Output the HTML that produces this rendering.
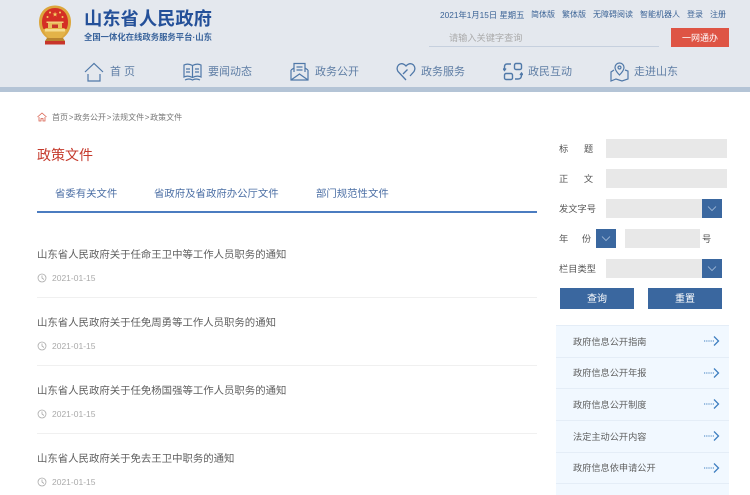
<!DOCTYPE html>
<html lang="zh"><head><meta charset="utf-8">
<style>
html,body{margin:0;padding:0;background:#fff}
#p{position:relative;width:750px;height:495px;overflow:hidden;font-family:"Liberation Sans","Noto Sans CJK SC",sans-serif;background:#fff}
#p div,#p span.a,#p svg{position:absolute}
.t{white-space:nowrap;line-height:1}
.nav{font-size:11px;color:#5f7ea5;top:67px}
.top{font-size:8px;color:#3b6396;top:11px}
.lb{font-size:9.25px;color:#555;left:559px}
.in{background:#e8e8e8}
.bt{background:#3a679f}
.li{left:573px;font-size:9.2px;color:#5f5f5f}
.bd{left:556px;width:173px;height:1px;background:#e4edf7}
.h{left:37px;font-size:10.4px;color:#5f5f5f}
.d{left:52px;font-size:8.5px;color:#aaa}
.ln{left:37px;width:500px;height:1px;background:#f0f0f0}
.tab{top:189.500px;font-size:10.4px;color:#4c6fa5}
.s{margin:0 .7px}
</style></head><body><div id="p">

<div style="left:0;top:0;width:750px;height:87px;background:#e4e8ee"></div>
<div style="left:0;top:87px;width:750px;height:5px;background:#b4c4d6"></div>

<!-- emblem -->
<svg style="left:37px;top:4px" width="36" height="41" viewBox="0 0 36 41">
<path d="M18 1.500C8 1.500 2 9 2 18C2 26 6 31 10 34H26C30 31 34 26 34 18C34 9 28 1.500 18 1.500Z" fill="#dca63c"/>
<path d="M18 4C10 4 5 10 5 18C5 21 5.500 23 6.500 25H29.500C30.500 23 31 21 31 18C31 10 26 4 18 4Z" fill="#d42f25"/>
<path d="M6 26Q11 36 18 36Q25 36 30 26L27 24H9Z" fill="#e3b348"/>
<rect x="8" y="25" width="20" height="2.500" fill="#f5dc90"/>
<path d="M11 24V19H25V24Z" fill="#e9bd5c"/>
<rect x="9.500" y="17.500" width="17" height="1.500" fill="#f0cd78"/>
<rect x="15" y="20.500" width="6" height="3.500" fill="#c8352a"/>
<rect x="8" y="37" width="20" height="3.500" fill="#c8352a"/>
<path d="M10 34L8 37H28L26 34Z" fill="#b8842f"/>
<text x="18" y="12.500" font-size="6.500" fill="#f5d060" text-anchor="middle" font-family="DejaVu Sans">★</text>
<circle cx="10.500" cy="13" r="1" fill="#f5d060"/><circle cx="25.500" cy="13" r="1" fill="#f5d060"/><circle cx="13" cy="8.500" r="1" fill="#f5d060"/><circle cx="23" cy="8.500" r="1" fill="#f5d060"/>
</svg>

<div class="t" style="left:84px;top:10px;font-size:18.3px;font-weight:700;color:#245099">山东省人民政府</div>
<div class="t" style="left:84px;top:33px;font-size:8.35px;font-weight:700;color:#3a649c">全国一体化在线政务服务平台·山东</div>

<div class="t top" style="left:440px;font-size:8.3px">2021年1月15日 星期五</div>
<div class="t top" style="left:531px">简体版</div>
<div class="t top" style="left:562px">繁体版</div>
<div class="t top" style="left:593px">无障碍阅读</div>
<div class="t top" style="left:640px">智能机器人</div>
<div class="t top" style="left:687px">登录</div>
<div class="t top" style="left:710px">注册</div>

<div class="t" style="left:449px;top:34px;font-size:9.2px;color:#aaa">请输入关键字查询</div>
<div style="left:429px;top:46px;width:230px;height:1px;background:#c6d0de"></div>
<div style="left:671px;top:28px;width:58px;height:19px;background:#de5444"></div>
<div class="t" style="left:682px;top:34px;font-size:9px;color:#fff">一网通办</div>

<!-- nav icons -->
<svg style="left:84px;top:62px" width="20" height="20" viewBox="0 0 20 20" fill="none" stroke="#4f78a8" stroke-width="1.200">
<path d="M1 10L10 1.500L19 10"/><path d="M4 12V19H16V12"/></svg>
<div class="t nav" style="left:110px">首<span style="margin-left:3px">页</span></div>

<svg style="left:183px;top:62px" width="19" height="19" viewBox="0 0 19 19" fill="none" stroke="#4f78a8" stroke-width="1.200">
<path d="M1 3Q5 1 9.500 3.500Q14 1 18 3V15Q14 13 9.500 15.500Q5 13 1 15ZM9.500 3.500V15.500"/><path d="M3 7H7M3 10H7M12 7H16M12 10H16M2 18Q6 16 9.500 18Q13 16 17 18"/></svg>
<div class="t nav" style="left:208px">要闻动态</div>

<svg style="left:290px;top:62px" width="19" height="19" viewBox="0 0 19 19" fill="none" stroke="#4f78a8" stroke-width="1.200">
<path d="M1 8V18H18V8M1 18L9.500 12L18 18M1 8L4 6M18 8L15 6"/><path d="M4 10V1.500H15V10M6.500 5H12.500M6.500 8H12.500"/></svg>
<div class="t nav" style="left:315px">政务公开</div>

<svg style="left:396px;top:62px" width="20" height="19" viewBox="0 0 20 19" fill="none" stroke="#4f78a8" stroke-width="1.300">
<path d="M10 18L2 9.500Q0 6 2.500 3Q6 0 10 4Q14 0 17.500 3Q20 6 18 9.500L14 14"/><path d="M7 12L11.500 7.500"/></svg>
<div class="t nav" style="left:421px">政务服务</div>

<svg style="left:503px;top:62px" width="20" height="19" viewBox="0 0 20 19" fill="none" stroke="#4f78a8" stroke-width="1.400">
<rect x="11.500" y="1.500" width="7" height="6" rx="1.500"/><rect x="1.500" y="11.500" width="8" height="6" rx="1.500"/>
<path d="M8 2H4Q1.500 2 1.500 5V8M0 6.500L1.500 8.500L3 6.500M12 17H15Q18.500 17 18.500 13V11M17 13L18.500 11L20 13"/></svg>
<div class="t nav" style="left:528px">政民互动</div>

<svg style="left:610px;top:62px" width="19" height="20" viewBox="0 0 19 20" fill="none" stroke="#4f78a8" stroke-width="1.200">
<path d="M9.500 13Q5 8.500 5 5.500A4.500 4.500 0 0 1 14 5.500Q14 8.500 9.500 13Z"/><circle cx="9.500" cy="5.500" r="1.500"/>
<path d="M4 8L1 10V19L6 17L12 19L18 17V9L15 8"/></svg>
<div class="t nav" style="left:634px">走进山东</div>

<!-- breadcrumb -->
<svg style="left:37px;top:112px" width="10" height="10" viewBox="0 0 10 10" fill="none" stroke="#d8604f" stroke-width=".8">
<path d="M.5 5L5 1L9.500 5M2 5V9H4V6.500H6V9H8V5"/></svg>
<div class="t" style="left:52px;top:113.500px;font-size:8px;color:#777">首页<span class="s">&gt;</span>政务公开<span class="s">&gt;</span>法规文件<span class="s">&gt;</span>政策文件</div>

<div class="t" style="left:37px;top:148px;font-size:14px;color:#c53a2c">政策文件</div>

<div class="t tab" style="left:55px">省委有关文件</div>
<div class="t tab" style="left:154px">省政府及省政府办公厅文件</div>
<div class="t tab" style="left:316px">部门规范性文件</div>
<div style="left:37px;top:211px;width:500px;height:2px;background:#4b7cc0"></div>

<div class="t h" style="top:250.500px">山东省人民政府关于任命王卫中等工作人员职务的通知</div>
<div class="t h" style="top:318.500px">山东省人民政府关于任免周勇等工作人员职务的通知</div>
<div class="t h" style="top:386.500px">山东省人民政府关于任免杨国强等工作人员职务的通知</div>
<div class="t h" style="top:454.500px">山东省人民政府关于免去王卫中职务的通知</div>

<svg style="left:37px;top:273px" width="10" height="10" viewBox="0 0 10 10" fill="none" stroke="#aaa" stroke-width=".8"><circle cx="5" cy="5" r="4"/><path d="M5 2.500V5L7 6.500"/></svg>
<svg style="left:37px;top:341px" width="10" height="10" viewBox="0 0 10 10" fill="none" stroke="#aaa" stroke-width=".8"><circle cx="5" cy="5" r="4"/><path d="M5 2.500V5L7 6.500"/></svg>
<svg style="left:37px;top:409px" width="10" height="10" viewBox="0 0 10 10" fill="none" stroke="#aaa" stroke-width=".8"><circle cx="5" cy="5" r="4"/><path d="M5 2.500V5L7 6.500"/></svg>
<svg style="left:37px;top:477px" width="10" height="10" viewBox="0 0 10 10" fill="none" stroke="#aaa" stroke-width=".8"><circle cx="5" cy="5" r="4"/><path d="M5 2.500V5L7 6.500"/></svg>

<div class="t d" style="top:274px">2021-01-15</div>
<div class="t d" style="top:342px">2021-01-15</div>
<div class="t d" style="top:410px">2021-01-15</div>
<div class="t d" style="top:478px">2021-01-15</div>

<div class="ln" style="top:297px"></div>
<div class="ln" style="top:365px"></div>
<div class="ln" style="top:433px"></div>

<!-- form -->
<div class="t lb" style="top:145px;word-spacing:13px">标 题</div>
<div class="in" style="left:606px;top:139px;width:121px;height:19px"></div>
<div class="t lb" style="top:175px;word-spacing:13px">正 文</div>
<div class="in" style="left:606px;top:169px;width:121px;height:19px"></div>
<div class="t lb" style="top:205px">发文字号</div>
<div class="in" style="left:606px;top:199px;width:96px;height:19px"></div>
<div class="bt" style="left:702px;top:199px;width:20px;height:19px"></div>
<svg style="left:702px;top:199px" width="20" height="19" fill="none" stroke="#a9c0dc" stroke-width=".8"><path d="M6 7.500L10 11.500L14 7.500"/></svg>

<div class="t lb" style="top:235px;word-spacing:11px">年 份</div>
<div class="bt" style="left:596px;top:229px;width:20px;height:19px"></div>
<svg style="left:596px;top:229px" width="20" height="19" fill="none" stroke="#a9c0dc" stroke-width=".8"><path d="M6 7.500L10 11.500L14 7.500"/></svg>
<div class="in" style="left:625px;top:229px;width:75px;height:19px"></div>
<div class="t lb" style="left:702px;top:235px">号</div>

<div class="t lb" style="top:265px">栏目类型</div>
<div class="in" style="left:606px;top:259px;width:96px;height:19px"></div>
<div class="bt" style="left:702px;top:259px;width:20px;height:19px"></div>
<svg style="left:702px;top:259px" width="20" height="19" fill="none" stroke="#a9c0dc" stroke-width=".8"><path d="M6 7.500L10 11.500L14 7.500"/></svg>

<div class="bt" style="left:560px;top:288px;width:74px;height:21px"></div>
<div class="t" style="left:587px;top:295px;font-size:10px;color:#fff">查询</div>
<div class="bt" style="left:648px;top:288px;width:74px;height:21px"></div>
<div class="t" style="left:675px;top:295px;font-size:10px;color:#fff">重置</div>

<!-- side list -->
<div style="left:556px;top:325px;width:173px;height:170px;background:#f1f8ff"></div>
<div class="bd" style="top:325px"></div>
<div class="bd" style="top:357px"></div>
<div class="bd" style="top:388px"></div>
<div class="bd" style="top:420px"></div>
<div class="bd" style="top:452px"></div>
<div class="bd" style="top:483px"></div>
<div class="t li" style="top:337.500px">政府信息公开指南</div>
<div class="t li" style="top:369px">政府信息公开年报</div>
<div class="t li" style="top:401px">政府信息公开制度</div>
<div class="t li" style="top:433px">法定主动公开内容</div>
<div class="t li" style="top:464px">政府信息依申请公开</div>

<svg style="left:704px;top:335px" width="16" height="12" fill="none" stroke="#3f7fc0"><path d="M0 6H10" stroke-width="1" stroke-dasharray="1.200 1"/><path d="M10 1.500L14.500 6L10 10.500" stroke-width="1.300"/></svg>
<svg style="left:704px;top:367px" width="16" height="12" fill="none" stroke="#3f7fc0"><path d="M0 6H10" stroke-width="1" stroke-dasharray="1.200 1"/><path d="M10 1.500L14.500 6L10 10.500" stroke-width="1.300"/></svg>
<svg style="left:704px;top:398px" width="16" height="12" fill="none" stroke="#3f7fc0"><path d="M0 6H10" stroke-width="1" stroke-dasharray="1.200 1"/><path d="M10 1.500L14.500 6L10 10.500" stroke-width="1.300"/></svg>
<svg style="left:704px;top:430px" width="16" height="12" fill="none" stroke="#3f7fc0"><path d="M0 6H10" stroke-width="1" stroke-dasharray="1.200 1"/><path d="M10 1.500L14.500 6L10 10.500" stroke-width="1.300"/></svg>
<svg style="left:704px;top:462px" width="16" height="12" fill="none" stroke="#3f7fc0"><path d="M0 6H10" stroke-width="1" stroke-dasharray="1.200 1"/><path d="M10 1.500L14.500 6L10 10.500" stroke-width="1.300"/></svg>

</div></body></html>
